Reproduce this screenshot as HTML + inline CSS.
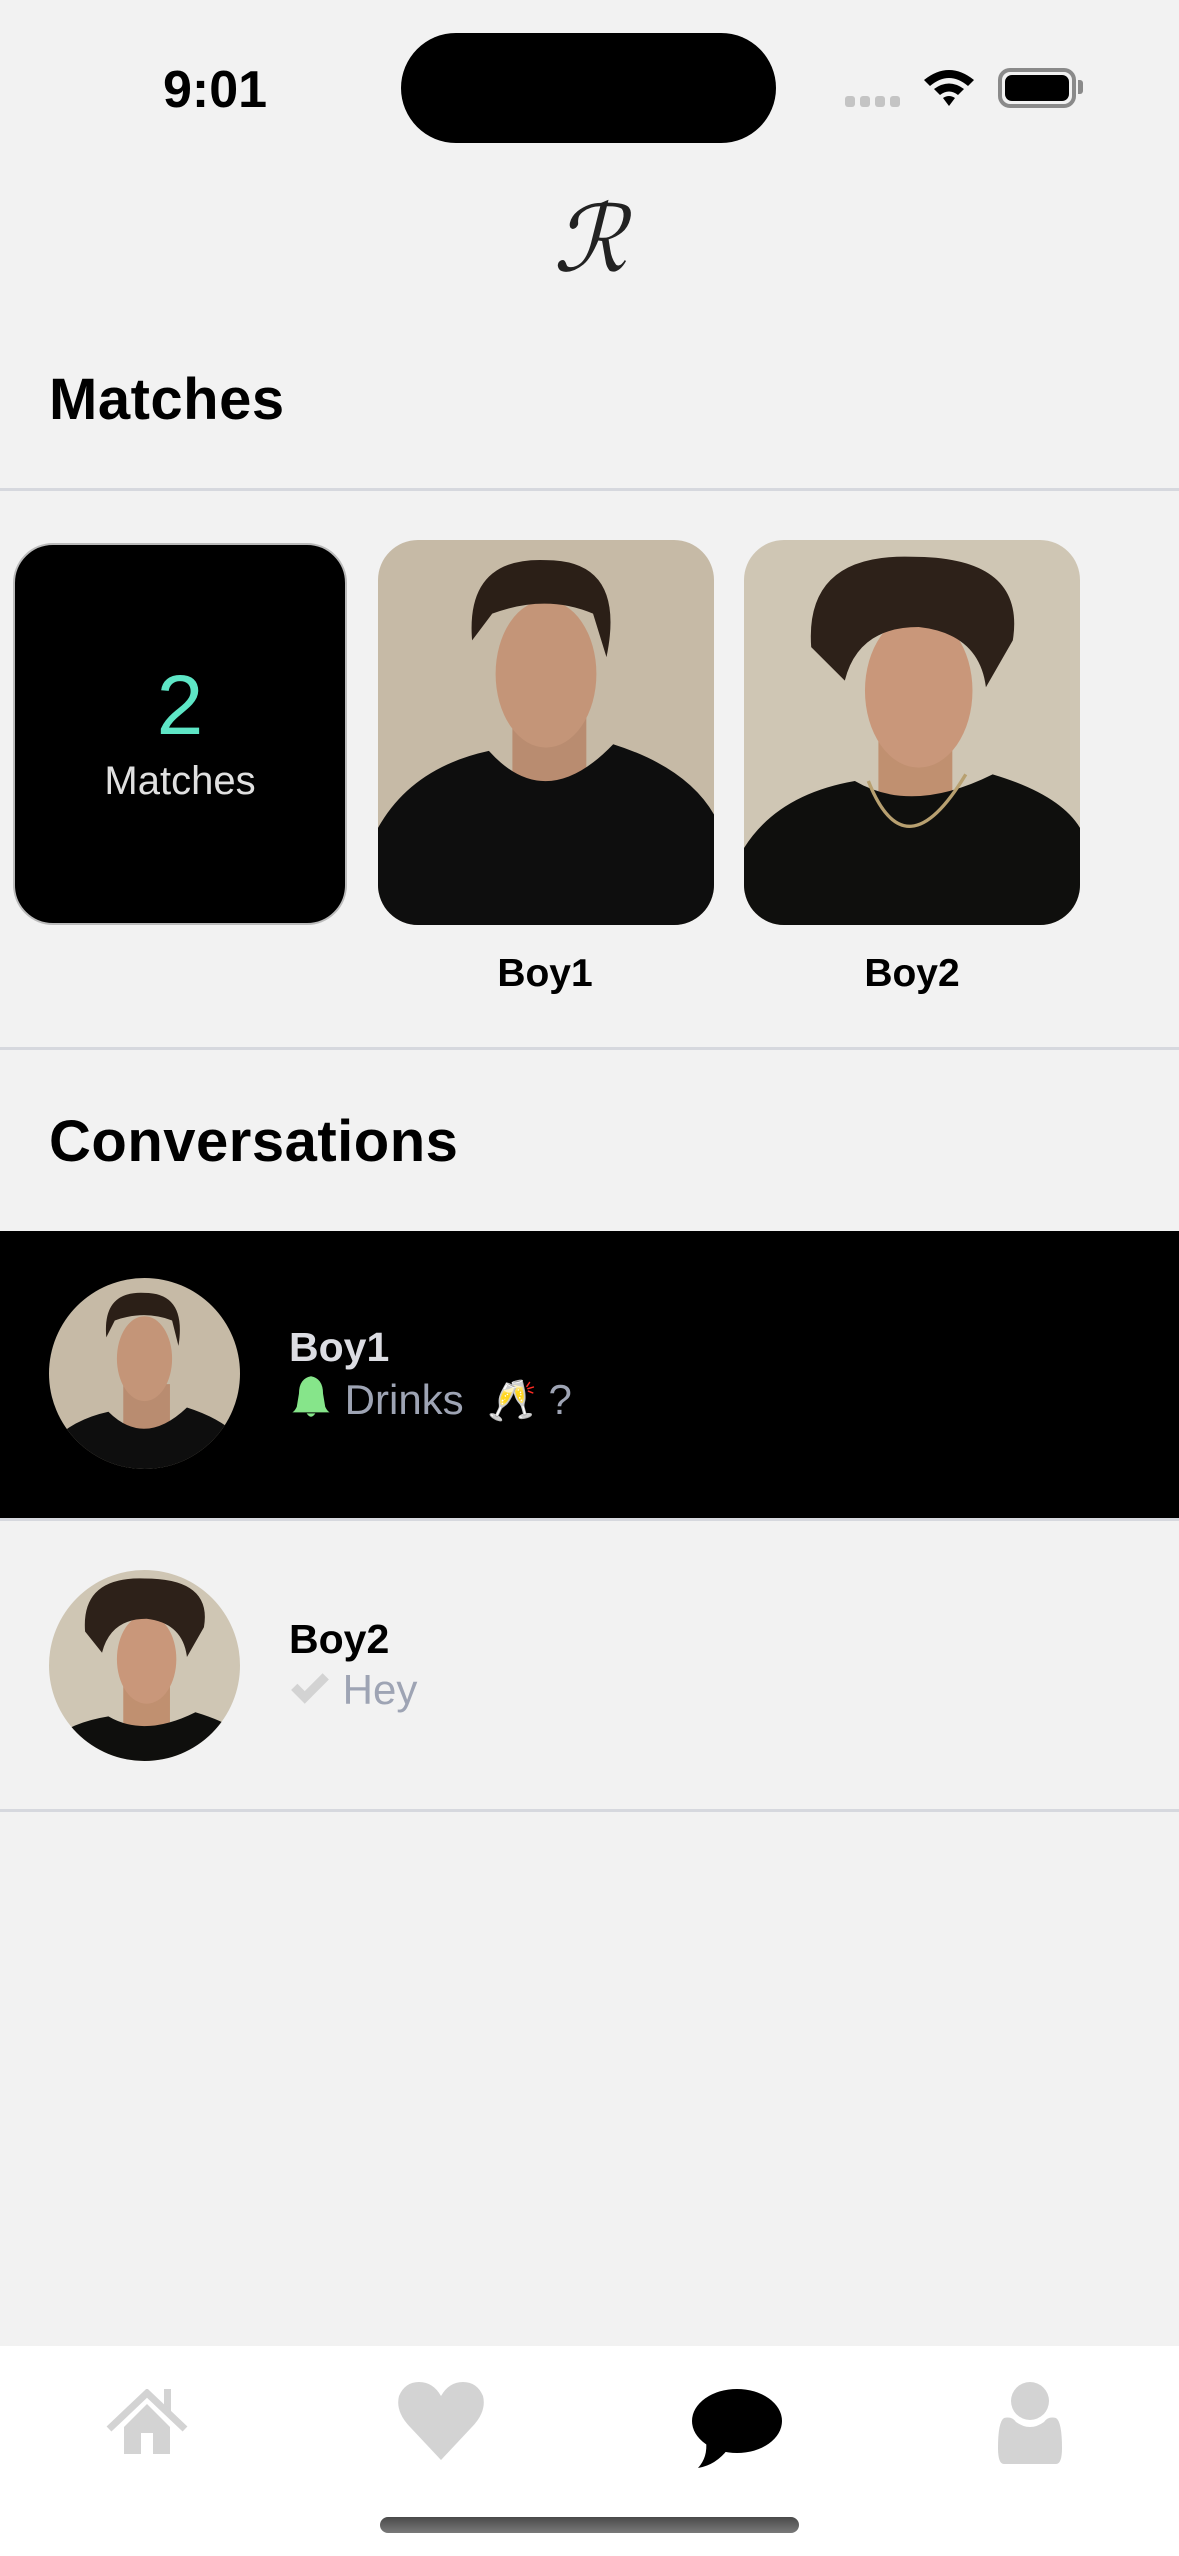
<!DOCTYPE html>
<html><head><meta charset="utf-8"><style>
*{margin:0;padding:0;box-sizing:border-box}
body{width:1179px;height:2556px;background:#f2f2f2;position:relative;overflow:hidden;font-family:"Liberation Sans","DejaVu Sans",sans-serif}
.a{position:absolute}
.hr{position:absolute;left:0;width:1179px;height:3px;background:#d6d8de}
.card{position:absolute;width:336px;height:385px;border-radius:40px;overflow:hidden}
.name{position:absolute;font-weight:bold;font-size:39px;color:#000;transform:translateX(-50%)}
</style></head><body>
<div class="a" style="left:163px;top:60px;font-size:52px;font-weight:bold;color:#000">9:01</div>
<div class="a" style="left:401px;top:33px;width:375px;height:110px;background:#000;border-radius:55px"></div>
<div class="a" style="left:845px;top:96px;display:flex;gap:5px"><i style="width:10px;height:11px;background:#c4c4c4;border-radius:3px"></i><i style="width:10px;height:11px;background:#c4c4c4;border-radius:3px"></i><i style="width:10px;height:11px;background:#c4c4c4;border-radius:3px"></i><i style="width:10px;height:11px;background:#c4c4c4;border-radius:3px"></i></div>
<svg class="a" style="left:922px;top:68px" width="54" height="40" viewBox="0 0 54 40"><path d="M2 12 Q27 -8 52 12 L46 18 Q27 2 8 18Z M12 21 Q27 10 42 21 L36 27 Q27 20 18 27Z M21 30 Q27 26 33 30 L27 38Z" fill="#000"/></svg>
<div class="a" style="left:998px;top:68px;width:78px;height:40px;border:4px solid #8a8a8a;border-radius:12px;padding:3px"><div style="width:100%;height:100%;background:#000;border-radius:7px"></div></div>
<div class="a" style="left:1078px;top:80px;width:5px;height:14px;background:#8a8a8a;border-radius:0 3px 3px 0"></div>
<div class="a" style="left:530px;top:186px;width:120px;text-align:center;font-family:'Liberation Serif',serif;font-style:italic;font-size:92px;color:#222">ℛ</div>
<div class="a" style="left:49px;top:366px;font-size:58px;font-weight:bold;letter-spacing:0.5px">Matches</div>
<div class="hr" style="top:488px"></div>
<div class="a" style="left:13px;top:543px;width:334px;height:382px;background:#000;border:2px solid #bbb;border-radius:40px;text-align:center">
<div style="margin-top:118px;font-size:84px;color:#5ee6c6;line-height:1">2</div>
<div style="margin-top:12px;font-size:40px;color:#e0e0e0">Matches</div></div>
<div class="card" style="left:378px;top:540px"><svg width="336" height="385" viewBox="0 0 100 115" preserveAspectRatio="none"><rect width="100" height="115" fill="#c6baa6"/><rect x="40" y="50" width="22" height="30" fill="#b98c70"/><ellipse cx="50" cy="40" rx="15" ry="22" fill="#c49578"/><path d="M0 115 L0 86 Q10 68 33 63 Q50 82 70 61 Q92 68 100 82 L100 115Z" fill="#0e0e0e"/><path d="M28 30 Q26 5 50 6 Q74 6 68 35 L64 22 Q50 16 34 22Z" fill="#2b1f17"/></svg></div>
<div class="card" style="left:744px;top:540px"><svg width="336" height="385" viewBox="0 0 100 115" preserveAspectRatio="none"><rect width="100" height="115" fill="#cfc6b4"/><rect x="40" y="55" width="22" height="25" fill="#c09070"/><ellipse cx="52" cy="45" rx="16" ry="23" fill="#c9977a"/><path d="M0 115 L0 92 Q10 76 33 72 Q50 82 74 70 Q94 76 100 86 L100 115Z" fill="#0f0f0d"/><path d="M20 32 Q18 4 50 5 Q84 5 80 30 L72 44 Q70 28 52 26 Q34 26 30 42Z" fill="#2d2119"/><path d="M37 72 Q48 100 66 70" fill="none" stroke="#b8a070" stroke-width="1"/></svg></div>
<div class="name" style="left:545px;top:952px">Boy1</div>
<div class="name" style="left:912px;top:952px">Boy2</div>
<div class="hr" style="top:1047px"></div>
<div class="a" style="left:49px;top:1108px;font-size:58px;font-weight:bold;letter-spacing:0.5px">Conversations</div>
<div class="a" style="left:0;top:1231px;width:1179px;height:287px;background:#000"></div>
<div class="a" style="left:49px;top:1278px;width:191px;height:191px;border-radius:50%;overflow:hidden"><svg width="191" height="191" viewBox="5 0 90 90"><rect x="0" width="100" height="115" fill="#c6baa6"/><rect x="40" y="50" width="22" height="30" fill="#b98c70"/><ellipse cx="50" cy="38" rx="13" ry="20" fill="#c49578"/><path d="M0 115 L0 86 Q10 68 33 63 Q50 80 70 61 Q92 68 100 82 L100 115Z" fill="#0e0e0e"/><path d="M32 28 Q30 6 50 7 Q70 7 66 32 L63 20 Q50 15 36 20Z" fill="#2b1f17"/></svg></div>
<div class="a" style="left:289px;top:1324px;font-size:41px;font-weight:bold;color:#dcdde3">Boy1</div>
<div class="a" style="left:289px;top:1374px;font-size:42px;color:#9ea4b4;white-space:nowrap"><svg width="44" height="46" viewBox="0 0 34 42" style="vertical-align:-6px"><path d="M17 2 Q6 4 6 18 L4 30 Q2 34 0 35 L34 35 Q32 34 30 30 L28 18 Q28 4 17 2Z M13 36 Q17 42 21 36Z" fill="#86e58a"/></svg> Drinks&nbsp; <span style="font-size:40px">🥂</span> ?</div>
<div class="hr" style="top:1518px"></div>
<div class="a" style="left:49px;top:1570px;width:191px;height:191px;border-radius:50%;overflow:hidden"><svg width="191" height="191" viewBox="7 3 90 90"><rect x="0" width="110" height="115" fill="#cfc6b4"/><rect x="42" y="55" width="22" height="25" fill="#c09070"/><ellipse cx="53" cy="45" rx="14" ry="21" fill="#c9977a"/><path d="M0 115 L0 92 Q10 76 35 72 Q52 82 76 70 Q96 76 105 86 L105 115Z" fill="#0f0f0d"/><path d="M24 32 Q22 6 52 7 Q84 7 80 30 L72 44 Q70 28 53 26 Q36 26 32 42Z" fill="#2d2119"/></svg></div>
<div class="a" style="left:289px;top:1616px;font-size:41px;font-weight:bold;color:#000">Boy2</div>
<div class="a" style="left:289px;top:1666px;font-size:42px;color:#9ea4b4"><svg width="42" height="34" viewBox="0 0 40 32" style="vertical-align:-2px"><path d="M2 17 L8 11 L15 18 L32 1 L38 7 L15 30Z" fill="#d3d3d3"/></svg> Hey</div>
<div class="hr" style="top:1809px"></div>
<div class="a" style="left:0;top:2346px;width:1179px;height:210px;background:#fff"></div>
<svg class="a" style="left:106px;top:2389px" width="82" height="66" viewBox="0 0 82 66"><rect x="58" y="0" width="7" height="24" fill="#d3d3d3"/><polyline points="3,40 41,4 79,40" fill="none" stroke="#d3d3d3" stroke-width="7"/><path d="M41 15 L18 38 L18 65 L35 65 L35 44 L47 44 L47 65 L64 65 L64 38Z" fill="#d3d3d3"/></svg>
<svg class="a" style="left:395px;top:2382px" width="92" height="80" viewBox="0 0 92 80"><path d="M46 78 L16 46 Q0 30 4 14 Q10 0 24 0 Q38 0 46 14 Q54 0 68 0 Q82 0 88 14 Q92 30 76 46Z" fill="#d3d3d3"/></svg>
<svg class="a" style="left:690px;top:2389px" width="94" height="80" viewBox="0 0 94 80"><ellipse cx="47" cy="32" rx="45" ry="32" fill="#000"/><path d="M16 52 Q18 68 8 79 Q26 76 38 60Z" fill="#000"/></svg>
<svg class="a" style="left:996px;top:2382px" width="68" height="82" viewBox="0 0 68 82"><ellipse cx="34" cy="19" rx="19" ry="19" fill="#d3d3d3"/><path d="M8 36 Q16 34 20 40 Q34 50 48 40 Q52 34 60 36 Q66 40 66 66 Q66 82 60 82 L8 82 Q2 82 2 66 Q2 40 8 36Z" fill="#d3d3d3"/></svg>
<div class="a" style="left:380px;top:2517px;width:419px;height:16px;border-radius:8px;background:linear-gradient(#4a4a4a,#7a7a7a)"></div>
</body></html>
